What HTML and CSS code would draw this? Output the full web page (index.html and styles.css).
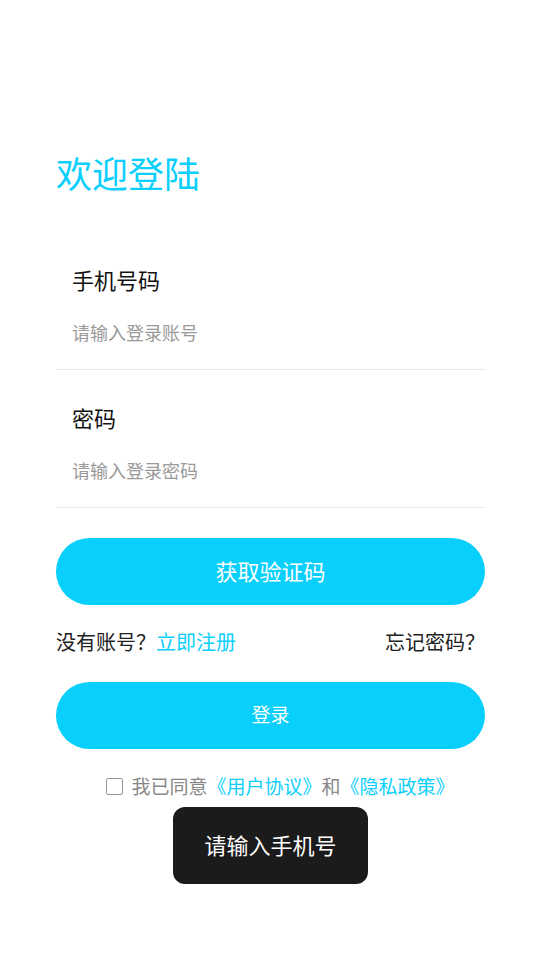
FILE: index.html
```html
<!DOCTYPE html>
<html lang="zh-CN">
<head>
<meta charset="UTF-8">
<meta name="viewport" content="width=device-width, initial-scale=1.0">
<title>欢迎登陆</title>
<link rel="stylesheet" href="styles.css">
</head>
<body>

<div class="page">
  <div class="title">欢迎登陆</div>

  <div class="field">
    <div class="fieldLabel">手机号码</div>
    <input class="fieldInput" type="text" placeholder="请输入登录账号">
  </div>

  <div class="field">
    <div class="fieldLabel">密码</div>
    <input class="fieldInput" type="password" placeholder="请输入登录密码">
  </div>

  <button class="mainButton codeButton">获取验证码</button>

  <div class="linkRow">
    <div>没有账号？<span class="link">立即注册</span></div>
    <div>忘记密码？</div>
  </div>

  <button class="mainButton loginButton">登录</button>

  <div class="agree">
    <span class="checkBox"></span>
    <span>我已同意<span class="link">《用户协议》</span>和<span class="link">《隐私政策》</span></span>
  </div>
</div>

<!-- toast over the content -->
<div class="toast">请输入手机号</div>

</body>
</html>
```

FILE: styles.css
```css
body {
  margin: 0;
  padding: 0;
  background-color: #fff;
  font-family: "Noto Sans CJK SC", "Noto Sans", sans-serif;
  color: #111;
}

.page {
  padding: 147px 55px 0 56px;
}

.title {
  font-size: 36px;
  line-height: 50px;
  color: #0bcffc;
  margin-bottom: 35px;
}

.field {
  padding: 32px 0 24px 16px;
  border-bottom: 1px solid #e6e6e6;
}
.fieldLabel {
  font-size: 22px;
  line-height: 30px;
}
.fieldInput {
  display: block;
  width: 100%;
  margin-top: 25px;
  padding: 0;
  border: none;
  outline: none;
  font-family: inherit;
  font-size: 18px;
  line-height: 26px;
  height: 26px;
  color: #333;
}
.fieldInput::placeholder {
  color: #9a9a9a;
}

.mainButton {
  display: block;
  width: 100%;
  height: 67px;
  padding: 0 0 4px 0;
  border: none;
  border-radius: 34px;
  background-color: #08cffc;
  color: #fff;
  font-family: inherit;
  cursor: pointer;
}
.codeButton {
  margin-top: 30px;
  font-size: 22px;
}
.loginButton {
  margin-top: 26px;
  font-size: 19px;
  padding-bottom: 5px;
}

.linkRow {
  display: flex;
  justify-content: space-between;
  margin-top: 23px;
  font-size: 20px;
  line-height: 28px;
  color: #222;
}
.link {
  color: #0bcffc;
}

.agree {
  display: flex;
  justify-content: center;
  align-items: center;
  gap: 8px;
  margin-top: 24px;
  padding-left: 20px;
  font-size: 19px;
  line-height: 26px;
  color: #888;
}
.checkBox {
  width: 15px;
  height: 15px;
  border: 1.5px solid #999;
  border-radius: 2px;
}

.toast {
  position: absolute;
  top: 807px;
  left: 173px;
  width: 195px;
  height: 77px;
  padding-bottom: 3px;
  box-sizing: border-box;
  border-radius: 12px;
  background-color: #1b1b1b;
  color: #fff;
  font-size: 22px;
  display: flex;
  align-items: center;
  justify-content: center;
}
```
